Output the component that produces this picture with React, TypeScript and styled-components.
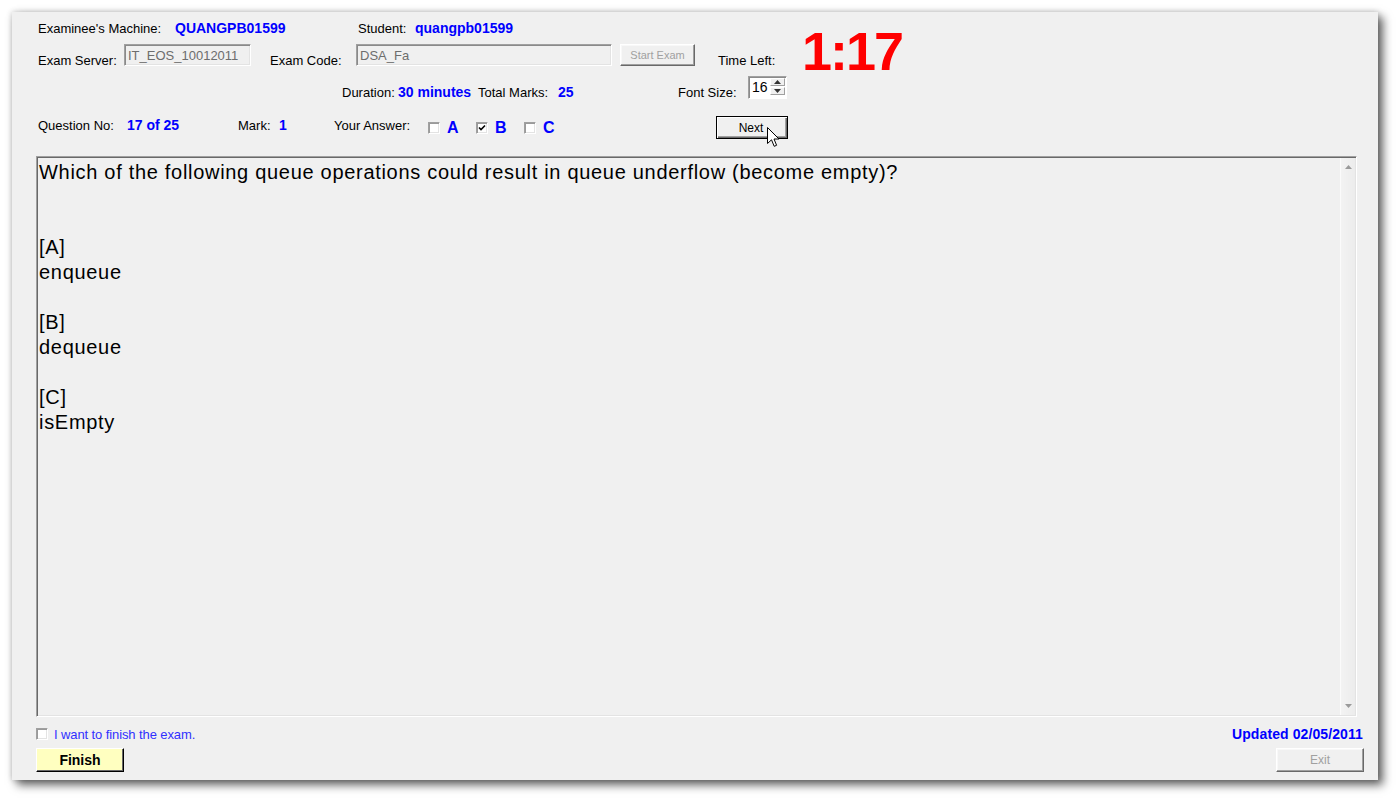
import React from "react";
import styled, { createGlobalStyle } from "styled-components";

const GlobalStyle = createGlobalStyle`
	html, body {
		margin: 0;
		padding: 0;
		background: #fff;
	}
	body {
		font-family: "Liberation Sans", Arial, sans-serif;
	}
`;

const Screen = styled.div`
	width: 1398px;
	height: 800px;
	box-sizing: border-box;
	padding: 12px 0 0 12px;
	background: #fff;
	overflow: hidden;
`;

const Window = styled.div`
	width: 1366px;
	height: 768px;
	box-sizing: border-box;
	padding: 0 14px 8px 24px;
	display: flex;
	flex-direction: column;
	background: #f0f0f0;
	box-shadow: 5px 5px 9px rgba(0, 0, 0, 0.6), 0 0 6px rgba(0, 0, 0, 0.22);
`;

const Row = styled.div<{ $top: number; $h: number }>`
	display: flex;
	align-items: flex-start;
	flex: none;
	height: ${(p) => p.$h}px;
	margin-top: ${(p) => p.$top}px;
	padding-left: 2px;
`;

const Label = styled.span<{ $w?: number; $mt?: number; $ml?: number }>`
	display: block;
	flex: none;
	width: ${(p) => (p.$w ? `${p.$w}px` : "auto")};
	margin-top: ${(p) => p.$mt ?? 0}px;
	margin-left: ${(p) => p.$ml ?? 0}px;
	font-size: 13px;
	line-height: 15px;
	color: #000;
	white-space: nowrap;
`;

const Value = styled(Label)`
	font-size: 14px;
	font-weight: bold;
	color: #0000ff;
`;

const Field = styled.div<{ $w: number }>`
	flex: none;
	width: ${(p) => p.$w}px;
	height: 22px;
	box-sizing: border-box;
	padding: 1px 0 0 3px;
	border: 1px solid;
	border-color: #a0a0a0 #fff #fff #a0a0a0;
	box-shadow: inset 1px 1px 0 #8a8a8a, inset -1px -1px 0 #e3e3e3;
	background: #f0f0f0;
	color: #6d6d6d;
	font-size: 13px;
	line-height: 19px;
	white-space: nowrap;
`;

const WinButton = styled.div<{ $w: number; $h: number; $ml?: number; $off?: boolean }>`
	position: relative;
	flex: none;
	width: ${(p) => p.$w}px;
	height: ${(p) => p.$h}px;
	margin-left: ${(p) => p.$ml ?? 0}px;
	box-sizing: border-box;
	display: flex;
	align-items: center;
	justify-content: center;
	border: 1px solid;
	border-color: #fff #696969 #696969 #fff;
	box-shadow: inset -1px -1px 0 #a0a0a0, inset 1px 1px 0 #f8f8f8;
	background: #f0f0f0;
	color: ${(p) => (p.$off ? "#a0a0a0" : "#000")};
	font-size: ${(p) => (p.$off ? 11 : 12)}px;
	white-space: nowrap;
`;

const DefaultButton = styled(WinButton)`
	border-color: #000;
	box-shadow: inset 1px 1px 0 #fff, inset -1px -1px 0 #696969, inset -2px -2px 0 #a0a0a0;
	padding-right: 2px;
`;

const FinishButton = styled(WinButton)`
	background: #ffffc0;
	border-color: #fff #000 #000 #fff;
	box-shadow: inset -1px -1px 0 #696969;
	font-size: 14px;
	font-weight: bold;
`;

const ExitButton = styled(WinButton)`
	margin-left: auto;
	font-size: 12px;
`;

const Timer = styled.div`
	flex: none;
	margin-top: -20px;
	font-size: 54px;
	line-height: 54px;
	font-weight: bold;
	color: #ff0000;
	letter-spacing: -2px;
`;

const Spinner = styled.div`
	flex: none;
	width: 39px;
	height: 23px;
	box-sizing: border-box;
	display: flex;
	border: 1px solid;
	border-color: #a0a0a0 #fff #fff #a0a0a0;
	box-shadow: inset 1px 1px 0 #8a8a8a;
	background: #fff;
	padding: 1px 1px 1px 0;
`;

const SpinValue = styled.span`
	flex: 1;
	padding-left: 3px;
	font-size: 14px;
	line-height: 19px;
	color: #000;
`;

const SpinButtons = styled.div`
	width: 15px;
	display: flex;
	flex-direction: column;
	gap: 1px;
	padding-bottom: 2px;
`;

const SpinButton = styled.div`
	flex: 1;
	display: flex;
	align-items: center;
	justify-content: center;
	box-sizing: border-box;
	border: 1px solid;
	border-color: #fff #a0a0a0 #a0a0a0 #fff;
	background: #f0f0f0;
`;

const CheckBox = styled.span<{ $mt?: number }>`
	flex: none;
	width: 12px;
	height: 12px;
	margin-top: ${(p) => p.$mt ?? 0}px;
	box-sizing: border-box;
	display: flex;
	align-items: center;
	justify-content: center;
	border: 1px solid;
	border-color: #a0a0a0 #fff #fff #a0a0a0;
	box-shadow: inset 1px 1px 0 #9a9a9a, inset -1px -1px 0 #e3e3e3;
	background: #fff;
`;

const AnswerOption = styled.div`
	flex: none;
	width: 48px;
	display: flex;
	align-items: flex-start;
`;

const AnswerLetter = styled.span`
	margin: 3px 0 0 7px;
	font-size: 16px;
	line-height: 18px;
	font-weight: bold;
	color: #0000ff;
`;

const Cursor = styled.svg`
	position: absolute;
	left: 50px;
	top: 10px;
	pointer-events: none;
`;

const QuestionBox = styled.div`
	flex: none;
	width: 1321px;
	height: 561px;
	margin-top: 17px;
	box-sizing: border-box;
	display: flex;
	border: 1px solid;
	border-color: #a0a0a0 #fff #fff #a0a0a0;
	box-shadow: inset 1px 1px 0 #696969, inset -1px -1px 0 #e3e3e3;
	padding: 1px;
	background: #f0f0f0;
`;

const QuestionText = styled.div`
	flex: 1;
	padding: 2px 0 0 1px;
	font-size: 20px;
	line-height: 25px;
	letter-spacing: 0.7px;
	color: #000;
	white-space: pre-wrap;
`;

const ScrollBar = styled.div`
	width: 15px;
	display: flex;
	flex-direction: column;
	justify-content: space-between;
	align-items: center;
	padding: 7px 0 7px 0;
	box-sizing: border-box;
	border-left: 1px solid #fbfbfb;
	background: linear-gradient(to right, #f3f3f3, #ececec);
`;

const FinishRow = styled.div`
	flex: none;
	display: flex;
	align-items: flex-start;
	height: 15px;
	margin-top: 10px;
`;

const FinishText = styled.span`
	margin-left: 6px;
	font-size: 13px;
	line-height: 15px;
	letter-spacing: -0.1px;
	color: #3030ff;
`;

const Updated = styled.span`
	margin-left: auto;
	margin-right: 1px;
	font-size: 14px;
	line-height: 15px;
	font-weight: bold;
	color: #0000ff;
	letter-spacing: 0.1px;
`;

const ButtonRow = styled.div`
	flex: none;
	display: flex;
	height: 24px;
	margin-top: 6px;
`;

const question = `Which of the following queue operations could result in queue underflow (become empty)?


[A]
enqueue

[B]
dequeue

[C]
isEmpty`;

const Tick = () => (
	<svg width='8' height='8' viewBox='0 0 8 8'>
		<path d='M1 3.5 L3 5.5 L7 1.5' stroke='#000' strokeWidth='1.6' fill='none' />
	</svg>
);

const Arrow = ({ up, color }: { up?: boolean; color: string }) => (
	<svg width='7' height='4' viewBox='0 0 7 4'>
		<path d={up ? "M0 4 L3.5 0 L7 4 Z" : "M0 0 L3.5 4 L7 0 Z"} fill={color} />
	</svg>
);

const options = [
	{ key: "A", checked: false },
	{ key: "B", checked: true },
	{ key: "C", checked: false },
];

const App = () => {
	return (
		<>
			<GlobalStyle />
			<Screen>
				<Window>
					<Row $top={5} $h={22}>
						<Label $w={137} $mt={4}>Examinee's Machine:</Label>
						<Value $w={183} $mt={4}>QUANGPB01599</Value>
						<Label $w={57} $mt={4}>Student:</Label>
						<Value $mt={4}>quangpb01599</Value>
					</Row>

					<Row $top={5} $h={22}>
						<Label $w={86} $mt={9}>Exam Server:</Label>
						<Field $w={127}>IT_EOS_10012011</Field>
						<Label $w={86} $mt={9} $ml={19}>Exam Code:</Label>
						<Field $w={256}>DSA_Fa</Field>
						<WinButton $w={75} $h={22} $ml={8} $off>
							Start Exam
						</WinButton>
						<Label $w={84} $mt={9} $ml={23}>Time Left:</Label>
						<Timer>1:17</Timer>
					</Row>

					<Row $top={10} $h={23}>
						<Label $w={56} $mt={9} $ml={304}>Duration:</Label>
						<Value $w={80} $mt={9}>30 minutes</Value>
						<Label $w={80} $mt={9}>Total Marks:</Label>
						<Value $w={120} $mt={9}>25</Value>
						<Label $w={70} $mt={9}>Font Size:</Label>
						<Spinner>
							<SpinValue>16</SpinValue>
							<SpinButtons>
								<SpinButton>
									<Arrow up color='#333' />
								</SpinButton>
								<SpinButton>
									<Arrow color='#333' />
								</SpinButton>
							</SpinButtons>
						</Spinner>
					</Row>

					<Row $top={17} $h={23}>
						<Label $w={89} $mt={2}>Question No:</Label>
						<Value $w={111} $mt={2}>17 of 25</Value>
						<Label $w={41} $mt={2}>Mark:</Label>
						<Value $w={55} $mt={2}>1</Value>
						<Label $w={94} $mt={2}>Your Answer:</Label>
						{options.map((o) => (
							<AnswerOption key={o.key}>
								<CheckBox $mt={6}>{o.checked ? <Tick /> : null}</CheckBox>
								<AnswerLetter>{o.key}</AnswerLetter>
							</AnswerOption>
						))}
						<DefaultButton $w={72} $h={23} $ml={144}>
							Next
							<Cursor width='13' height='21' viewBox='0 0 13 21'>
								<path
									d='M0.5 0.5 L0.5 16.5 L4.5 12.8 L7.2 19.3 L9.6 18.3 L7 12 L12 12 Z'
									fill='#fff'
									stroke='#000'
									strokeWidth='1'
									strokeLinejoin='miter'
								/>
							</Cursor>
						</DefaultButton>
					</Row>

					<QuestionBox>
						<QuestionText>{question}</QuestionText>
						<ScrollBar>
							<Arrow up color='#9a9a9a' />
							<Arrow color='#9a9a9a' />
						</ScrollBar>
					</QuestionBox>

					<FinishRow>
						<CheckBox $mt={1} />
						<FinishText>I want to finish the exam.</FinishText>
						<Updated>Updated 02/05/2011</Updated>
					</FinishRow>

					<ButtonRow>
						<FinishButton $w={88} $h={24}>
							Finish
						</FinishButton>
						<ExitButton $w={88} $h={24} $off>
							Exit
						</ExitButton>
					</ButtonRow>
				</Window>
			</Screen>
		</>
	);
};

export default App;
